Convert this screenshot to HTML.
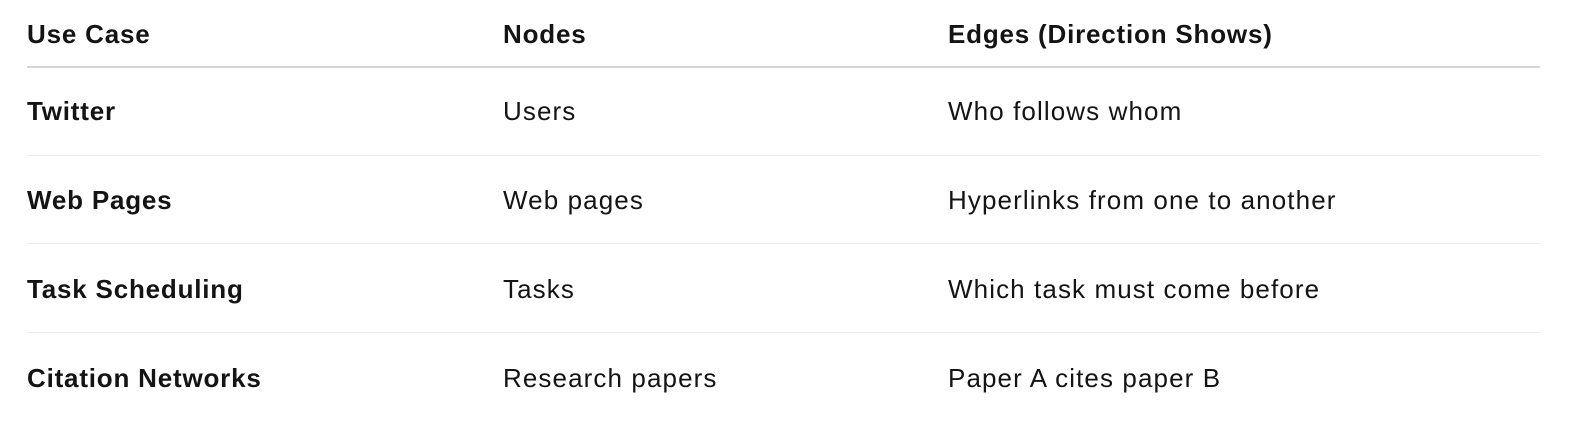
<!DOCTYPE html>
<html><head><meta charset="utf-8"><style>
html,body{margin:0;padding:0;background:#fff;width:1591px;height:437px;overflow:hidden;font-family:"Liberation Sans",sans-serif;color:#141414;}
.t{position:absolute;font-size:26px;line-height:30px;white-space:nowrap;letter-spacing:1.1px;}
.b{font-weight:bold;letter-spacing:0.8px;}
.l{position:absolute;left:27px;width:1513px;}
</style></head><body>
<div class="t b" style="left:27px;top:19px">Use Case</div>
<div class="t b" style="left:503px;top:19px">Nodes</div>
<div class="t b" style="left:948px;top:19px">Edges (Direction Shows)</div>
<div class="l" style="top:66px;height:2px;background:#d6d6d6"></div>

<div class="t b" style="left:27px;top:96px">Twitter</div>
<div class="t" style="left:503px;top:96px">Users</div>
<div class="t" style="left:948px;top:96px">Who follows whom</div>
<div class="l" style="top:155px;height:1px;background:#ececec"></div>

<div class="t b" style="left:27px;top:185px">Web Pages</div>
<div class="t" style="left:503px;top:185px">Web pages</div>
<div class="t" style="left:948px;top:185px">Hyperlinks from one to another</div>
<div class="l" style="top:243px;height:1px;background:#ececec"></div>

<div class="t b" style="left:27px;top:274px">Task Scheduling</div>
<div class="t" style="left:503px;top:274px">Tasks</div>
<div class="t" style="left:948px;top:274px">Which task must come before</div>
<div class="l" style="top:332px;height:1px;background:#ececec"></div>

<div class="t b" style="left:27px;top:363px">Citation Networks</div>
<div class="t" style="left:503px;top:363px">Research papers</div>
<div class="t" style="left:948px;top:363px">Paper A cites paper B</div>
</body></html>
